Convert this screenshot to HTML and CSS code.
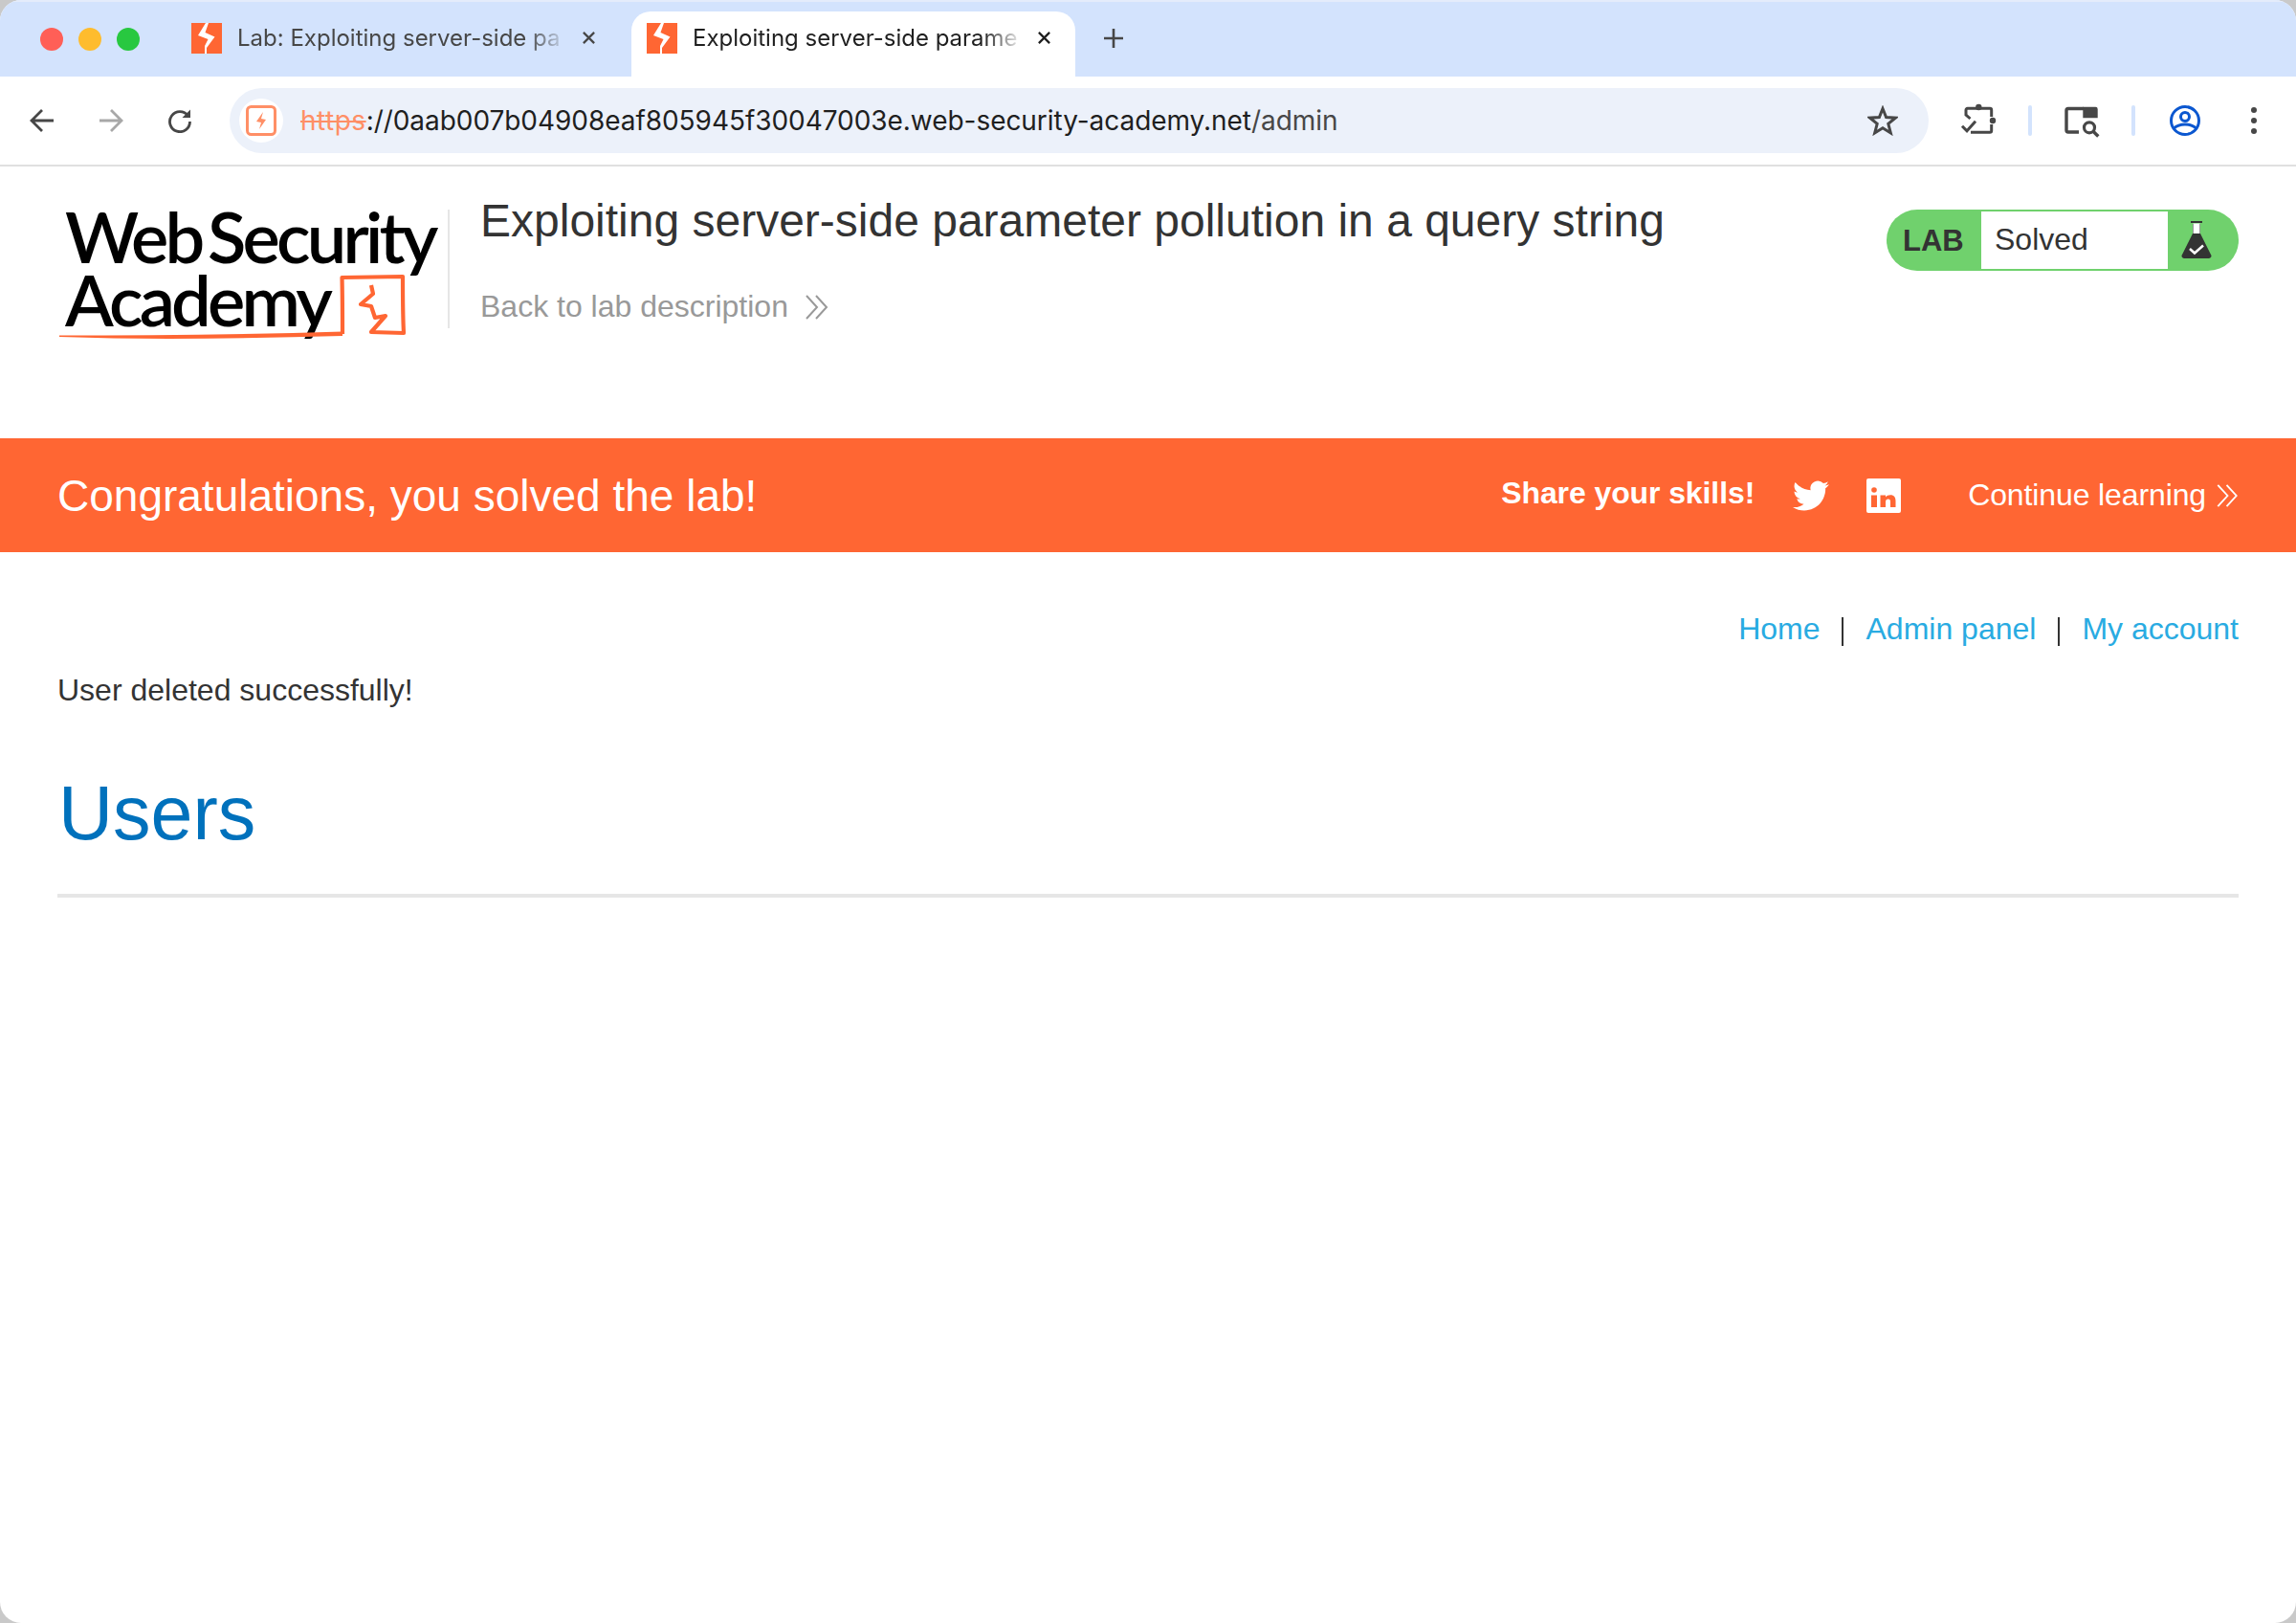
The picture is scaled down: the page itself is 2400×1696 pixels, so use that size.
FILE: index.html
```html
<!DOCTYPE html>
<html lang="en">
<head>
    <meta charset="UTF-8">
    <title>Exploiting server-side parameter pollution in a query string</title>
    <link rel="stylesheet" href="styles.css">
</head>
<body>
    <div class="window">
        <div class="tabstrip">
            <div class="lights">
                <span class="light red"></span>
                <span class="light yellow"></span>
                <span class="light green"></span>
            </div>
            <div class="tab">
                <svg class="favicon" viewBox="0 0 32 32"><rect width="32" height="32" fill="#ff6633"/><path d="M15 0 H18 L14.500 10 L24.500 14.500 L16 26 V32 H14 V24 L17.500 17 L7 13 Z" fill="#fff"/></svg>
                <span class="tab-title">Lab: Exploiting server-side pa</span>
                <svg class="tab-close" viewBox="0 0 16 16"><path d="M2 2 L14 14 M14 2 L2 14" stroke="#474747" stroke-width="2.400"/></svg>
            </div>
            <div class="tab active">
                <svg class="favicon" viewBox="0 0 32 32"><rect width="32" height="32" fill="#ff6633"/><path d="M15 0 H18 L14.500 10 L24.500 14.500 L16 26 V32 H14 V24 L17.500 17 L7 13 Z" fill="#fff"/></svg>
                <span class="tab-title">Exploiting server-side parame</span>
                <svg class="tab-close" viewBox="0 0 16 16"><path d="M2 2 L14 14 M14 2 L2 14" stroke="#1f1f1f" stroke-width="2.400"/></svg>
            </div>
            <svg class="new-tab" viewBox="0 0 22 22"><path d="M11 1 V21 M1 11 H21" stroke="#474747" stroke-width="2.600"/></svg>
        </div>

        <div class="toolbar">
            <div class="nav-btn"><svg viewBox="0 0 26 26"><path d="M25 13 H3 M13 2 L2 13 L13 24" fill="none" stroke="#474747" stroke-width="2.800"/></svg></div>
            <div class="nav-btn"><svg viewBox="0 0 26 26"><path d="M1 13 H23 M13 2 L24 13 L13 24" fill="none" stroke="#a8a8a8" stroke-width="2.800"/></svg></div>
            <div class="nav-btn"><svg viewBox="0 0 26 26"><path d="M21.500 8 A10.500 10.500 0 1 0 23.500 14" fill="none" stroke="#474747" stroke-width="2.800"/><path d="M24 1.500 V10 H15.500 Z" fill="#474747"/></svg></div>
            <div class="omnibox">
                <div class="site-icon">
                    <svg viewBox="0 0 32 32"><rect x="1.500" y="1.500" width="29" height="29" rx="4" fill="none" stroke="#ff8f66" stroke-width="3"/><path d="M18 7 L11 17 L16 18 L14 25 L21 15 L16 14 Z" fill="#ff8f66"/></svg>
                </div>
                <div class="url"><span class="scheme">https</span>://0aab007b04908eaf805945f30047003e.web-security-academy.net<span class="path">/admin</span></div>
                <svg class="star" viewBox="0 0 32 32"><path d="M16 3.500 L19.600 12.600 L29.400 13.200 L21.800 19.400 L24.300 28.900 L16 23.700 L7.700 28.900 L10.200 19.400 L2.600 13.200 L12.400 12.600 Z" fill="none" stroke="#474747" stroke-width="3"/></svg>
            </div>
            <div class="tools">
                <svg class="tool" viewBox="0 0 48 48"><path d="M16 36.300 H36 a1.700 1.700 0 0 0 1.700-1.700 V28 M37.700 20 V13 a1.700 1.700 0 0 0-1.700-1.700 H12.700 a1.700 1.700 0 0 0-1.700 1.700 V18 L15.500 22" fill="none" stroke="#474747" stroke-width="3"/><circle cx="24.300" cy="10" r="3.200" fill="#474747"/><circle cx="39" cy="24" r="3.200" fill="#474747"/><path d="M7 29.700 L12 34.700 L21 24.700" fill="none" stroke="#474747" stroke-width="3"/></svg>
                <span class="tool-sep"></span>
                <svg class="tool" viewBox="0 0 48 48"><path d="M21 36 H10 a2 2 0 0 1-2-2 V13.500 a2 2 0 0 1 2-2 H26" fill="none" stroke="#474747" stroke-width="3.400"/><path d="M25.300 9.800 H38.500 a2.200 2.200 0 0 1 2.200 2.200 V21.300 H25.300 Z" fill="#474747"/><circle cx="32" cy="31.300" r="5.500" fill="none" stroke="#474747" stroke-width="3.200"/><path d="M36 35.300 L41.300 40.500" stroke="#474747" stroke-width="3.400"/></svg>
                <span class="tool-sep"></span>
                <svg class="tool" viewBox="0 0 48 48"><circle cx="24" cy="24" r="14.500" fill="none" stroke="#0b57d0" stroke-width="3"/><circle cx="24" cy="20" r="4.500" fill="none" stroke="#0b57d0" stroke-width="3"/><path d="M12.500 32 C18 26.500 30 26.500 35.500 32" fill="none" stroke="#0b57d0" stroke-width="3"/></svg>
                <svg class="tool dots" viewBox="0 0 48 48"><circle cx="24" cy="13" r="3" fill="#474747"/><circle cx="24" cy="24" r="3" fill="#474747"/><circle cx="24" cy="35" r="3" fill="#474747"/></svg>
            </div>
        </div>

        <header class="lab-header">
            <div class="logo">
                <div class="logo-line">Web Security</div>
                <div class="logo-line">Academy</div>
                <svg class="logo-mark" viewBox="0 0 370 80">
                    <path d="M298 69 C298 50 298 30 297.500 10 L361 9 C361 30 361 50 362 68 L328 67 L343 50 L332 52 L328 40 L317 38 L330 27 L328 18" fill="none" stroke="#ff6633" stroke-width="4.200" stroke-linejoin="round"/>
                    <path d="M2 70.500 C100 70.500 200 69.500 298 66.500 V71 C200 73.500 100 75.500 2 72 Z" fill="#ff6633"/>
                </svg>
            </div>
            <div class="lab-title">
                <h2>Exploiting server-side parameter pollution in a query string</h2>
                <a class="back-link" href="#">Back to lab description
                    <svg class="chevrons" viewBox="0 0 26 26"><path d="M2 1 L13 13 L2 25 M12 1 L23 13 L12 25" fill="none" stroke="#999" stroke-width="2"/></svg>
                </a>
            </div>
            <div class="lab-status">
                <span class="status-tag">LAB</span>
                <span class="status-text">Solved</span>
                <span class="status-icon">
                    <svg viewBox="0 0 32 40"><path d="M10 1 H22" stroke="#333" stroke-width="2"/><path d="M12 3 H20 V13 L31 35 A2.500 2.500 0 0 1 29 39 H3 A2.500 2.500 0 0 1 1 35 L12 13 Z" fill="#333"/><path d="M12.500 2.500 H19.500 V13 H12.500 Z" fill="#fff"/><path d="M9 29 L14 33.500 L23 25.500" fill="none" stroke="#fff" stroke-width="2.500"/></svg>
                </span>
            </div>
        </header>

        <section class="solved-banner">
            <h4>Congratulations, you solved the lab!</h4>
            <div class="banner-right">
                <span class="share">Share your skills!</span>
                <svg class="twitter" viewBox="0 0 24 24"><path d="M23.950 4.570a10 10 0 0 1-2.820.770 4.960 4.960 0 0 0 2.160-2.720c-.950.550-2 .960-3.130 1.190a4.920 4.920 0 0 0-8.380 4.480C7.690 8.100 4.070 6.130 1.640 3.160a4.820 4.820 0 0 0-.670 2.480c0 1.710.870 3.210 2.190 4.100a4.900 4.900 0 0 1-2.230-.620v.060a4.920 4.920 0 0 0 3.950 4.830 5 5 0 0 1-2.210.080 4.940 4.940 0 0 0 4.600 3.420A9.870 9.870 0 0 1 0 19.540a14 14 0 0 0 7.560 2.210c9.050 0 14-7.500 14-13.980 0-.210 0-.420-.020-.630a9.940 9.940 0 0 0 2.460-2.550z" fill="#fff"/></svg>
                <svg class="linkedin" viewBox="0 0 36 36"><rect width="36" height="36" rx="2" fill="#fff"/><circle cx="8" cy="12" r="2.800" fill="#ff6633"/><path d="M5 17.500 H11 V30 H5 Z M14.500 17.500 H20 V19.500 C21 18 23 17.300 25 17.300 C29 17.300 30.500 20 30.500 23.500 V30 H25 V24.500 C25 22.800 24.500 21.500 22.800 21.500 C21 21.500 20 22.800 20 24.500 V30 H14.500 Z" fill="#ff6633"/></svg>
                <a class="continue" href="#">Continue learning
                    <svg class="chevrons small" viewBox="1 0 23 26"><path d="M2 1 L13 13 L2 25 M12 1 L23 13 L12 25" fill="none" stroke="#fff" stroke-width="2"/></svg>
                </a>
            </div>
        </section>

        <main class="content">
            <nav class="top-links">
                <a href="#">Home</a><span class="bar"></span><a href="#">Admin panel</a><span class="bar"></span><a href="#">My account</a>
            </nav>
            <p class="message">User deleted successfully!</p>
            <h1>Users</h1>
            <hr>
        </main>
    </div>
</body>
</html>
```

FILE: styles.css
```css
* {
    box-sizing: border-box;
}

html, body {
    margin: 0;
    height: 100%;
    background: #c9c9c9;
}

.window {
    height: 1696px;
    background: #fff;
    border-radius: 22px;
    overflow: hidden;
    font-family: "Liberation Sans", Arial, sans-serif;
    color: #333;
}

/* browser chrome */
.tabstrip {
    display: flex;
    align-items: flex-end;
    height: 80px;
    background: #d3e3fd;
    border-top: 2px solid #e4ecfb;
}

.lights {
    display: flex;
    gap: 16px;
    align-self: center;
    padding-left: 42px;
    width: 176px;
}

.light {
    width: 24px;
    height: 24px;
    border-radius: 50%;
}

.red { background: #ff5f57; }
.yellow { background: #febc2e; }
.green { background: #28c840; }

.tab {
    display: flex;
    align-items: center;
    width: 484px;
    height: 68px;
    padding: 0 0 13px 24px;
    font-family: Inter, sans-serif;
    font-size: 24px;
    color: #474747;
}

.tab.active {
    width: 464px;
    padding-left: 16px;
    background: #fff;
    color: #1f1f1f;
    border-radius: 20px 20px 0 0;
}

.favicon {
    width: 32px;
    height: 32px;
    flex: none;
}

.tab-title {
    width: 345px;
    margin-left: 16px;
    white-space: nowrap;
    -webkit-mask-image: linear-gradient(to right, #000 88%, transparent);
    mask-image: linear-gradient(to right, #000 88%, transparent);
}

.tab-close {
    width: 15px;
    height: 15px;
    margin-left: 15px;
}

.new-tab {
    width: 22px;
    height: 22px;
    margin: 0 0 29px 29px;
}

.toolbar {
    display: flex;
    align-items: center;
    height: 94px;
    padding-left: 8px;
    background: #fff;
    border-bottom: 2px solid #e0e0e0;
    border-radius: 22px 22px 0 0;
}

.nav-btn {
    display: flex;
    justify-content: center;
    width: 72px;
}

.nav-btn svg {
    width: 26px;
    height: 26px;
}

.omnibox {
    display: flex;
    align-items: center;
    width: 1776px;
    height: 68px;
    margin-left: 16px;
    padding: 0 32px 0 10px;
    background: #ecf1fa;
    border-radius: 34px;
}

.site-icon {
    display: flex;
    align-items: center;
    justify-content: center;
    width: 46px;
    height: 46px;
    border-radius: 50%;
    background: #fff;
}

.site-icon svg {
    width: 32px;
    height: 32px;
}

.url {
    flex: 1;
    margin-left: 18px;
    font-family: Inter, sans-serif;
    font-size: 28px;
    letter-spacing: -0.05px;
    color: #1f1f1f;
}

.scheme {
    color: #ff8f66;
    letter-spacing: 0.5px;
    text-decoration: line-through;
}

.path {
    color: #474747;
}

.star {
    width: 32px;
    height: 32px;
}

.tools {
    display: flex;
    align-items: center;
    gap: 28px;
    margin-left: 28px;
}

.tool {
    width: 48px;
    height: 48px;
}

.tool-sep {
    width: 4px;
    height: 32px;
    border-radius: 2px;
    background: #d3e3fd;
}

.dots {
    margin-left: -4px;
}

/* lab header */
.lab-header {
    display: flex;
    height: 284px;
    padding: 0 60px;
}

.logo {
    position: relative;
    width: 410px;
    height: 124px;
    margin-top: 45px;
    padding-left: 8px;
    border-right: 2px solid #e6e6e6;
    font-family: Lato, sans-serif;
    font-size: 74px;
    font-weight: 600;
    line-height: 66px;
    letter-spacing: -3.8px;
    word-spacing: -8px;
    color: #000;
}

.logo-line {
    position: relative;
    top: -5px;
    white-space: nowrap;
}

.logo-mark {
    position: absolute;
    left: 0;
    top: 61px;
    width: 370px;
    height: 80px;
}

.lab-title {
    flex: 1;
    padding: 28px 0 0 32px;
}

.lab-title h2 {
    margin: 0;
    font-size: 48px;
    font-weight: 400;
    line-height: 58px;
}

.back-link {
    display: flex;
    align-items: center;
    gap: 17px;
    margin-top: 42px;
    font-size: 32px;
    color: #999;
    text-decoration: none;
}

.chevrons {
    width: 26px;
    height: 26px;
}

.chevrons.small {
    width: 24px;
    height: 24px;
}

.lab-status {
    display: flex;
    width: 368px;
    height: 64px;
    margin-top: 45px;
    background: #70d16d;
    border-radius: 32px;
}

.status-tag {
    width: 99px;
    padding-left: 17px;
    font-size: 31px;
    font-weight: 700;
    line-height: 66px;
}

.status-text {
    width: 195px;
    margin: 2px 0;
    padding-left: 14px;
    background: #fff;
    font-size: 32px;
    line-height: 58px;
}

.status-icon {
    display: flex;
    align-items: center;
    padding-left: 14px;
}

.status-icon svg {
    width: 32px;
    height: 40px;
}

/* solved banner */
.solved-banner {
    display: flex;
    align-items: center;
    justify-content: space-between;
    height: 119px;
    padding: 0 60px;
    background: #ff6633;
    color: #fff;
}

.solved-banner h4 {
    margin: 1px 0 0;
    font-size: 46px;
    font-weight: 400;
}

.banner-right {
    display: flex;
    align-items: center;
}

.share {
    margin-top: -4px;
    font-size: 32px;
    font-weight: 700;
    letter-spacing: -0.1px;
}

.twitter {
    width: 38px;
    height: 38px;
    margin-left: 40px;
}

.linkedin {
    width: 36px;
    height: 36px;
    margin-left: 39px;
}

.continue {
    display: flex;
    align-items: center;
    gap: 10px;
    margin-left: 70px;
    font-size: 32px;
    letter-spacing: -0.12px;
    color: #fff;
    text-decoration: none;
}

/* page content */
.content {
    padding: 0 60px;
}

.top-links {
    display: flex;
    justify-content: flex-end;
    align-items: center;
    margin-top: 60px;
    font-size: 32px;
    line-height: 40px;
}

.top-links a {
    color: #29abe2;
    text-decoration: none;
}

.bar {
    width: 2px;
    height: 30px;
    margin: 5px 23px 0;
    background: #333;
}

.message {
    margin: 24px 0 0;
    font-size: 32px;
    line-height: 40px;
}

.content h1 {
    margin: 64px 0 0;
    padding-left: 1px;
    font-size: 79px;
    font-weight: 400;
    line-height: 90px;
    color: #0071bc;
}

.content hr {
    height: 4px;
    margin: 39px 0 0;
    border: 0;
    background: #e6e6e6;
}
```
